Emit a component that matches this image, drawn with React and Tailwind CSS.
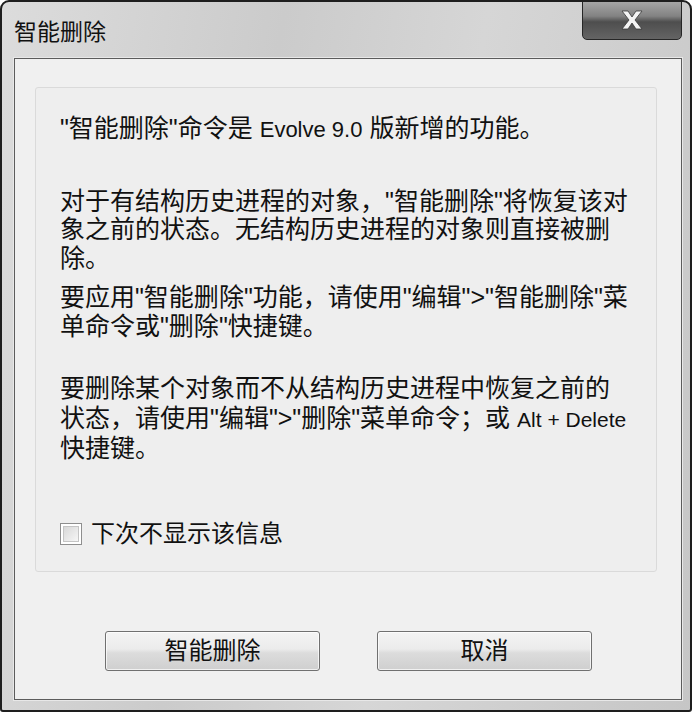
import React from 'react';

const FONT = { fontFamily: '"Liberation Sans", "Noto Sans CJK SC", sans-serif' };

function CloseButton() {
  return (
    <div className="w-[100px] h-[40px] -mt-[2px] rounded-b-[5px] border border-[#262626] bg-[linear-gradient(to_bottom,#a8a8a8_0%,#828282_40%,#4e4e4e_55%,#646464_100%)] shadow-[inset_0_1px_0_rgba(255,255,255,0.45)] flex items-center justify-center">
      <svg width="26" height="22" viewBox="0 0 26 22">
        <path d="M3 2 L9 2 L13 8 L17 2 L23 2 L16 11 L23 20 L17 20 L13 14 L9 20 L3 20 L10 11 Z" fill="#f4f4f4" stroke="#3a3a3a" strokeWidth="0.8" />
      </svg>
    </div>
  );
}

function Checkbox() {
  return (
    <div className="w-[22px] h-[22px] border border-[#8e8e8e] bg-white p-[2px]">
      <div className="w-full h-full border border-[#c4c4c4] bg-[linear-gradient(135deg,#d8d8d8,#f6f6f6)]" />
    </div>
  );
}

function DialogButton({ children }) {
  return (
    <button className="w-[215px] h-[40px] rounded-[3px] border border-[#707070] bg-[linear-gradient(to_bottom,#f4f4f4_0%,#ebebeb_45%,#dcdcdc_55%,#cfcfcf_100%)] shadow-[inset_0_0_0_1px_rgba(255,255,255,0.7)] text-[24px] text-[#111] leading-none">
      {children}
    </button>
  );
}

export default function App() {
  return (
    <div className="w-[694px] h-[713px] bg-white" style={FONT}>
      <div className="w-[692px] h-[712px] border-2 border-[#1e1e1e] rounded-tl-[9px] rounded-tr-[9px] rounded-b-[3px] bg-[linear-gradient(100deg,#dcdcdc_0%,#cbcbcb_35%,#d6d6d6_60%,#c6c6c6_100%)] flex flex-col overflow-hidden">
        {/* Title bar */}
        <div className="h-[56px] flex items-start justify-between pl-[12px] pr-[8px]">
          <div className="mt-[16px] text-[23px] leading-[28px] text-[#111]">智能删除</div>
          <CloseButton />
        </div>

        {/* Client area */}
        <div className="ml-[12px] mr-[8px] mb-[10px] flex-1 border border-[#5c5c5c] bg-[#f0f0f0] shadow-[0_0_0_1px_#e8e8e8]">
          <div className="ml-[20px] mt-[28px] w-[622px] h-[485px] border border-[#dadada] rounded-[3px] bg-[#eeeeee] pl-[24px] pt-[26px] text-[25px] leading-[28.5px] text-[#111] whitespace-nowrap">
            <div>"智能删除"命令是 <span className="text-[22px]">Evolve 9.0</span> 版新增的功能。</div>
            <div className="mt-[42px]">
              对于有结构历史进程的对象，"智能删除"将恢复该对<br />
              象之前的状态。无结构历史进程的对象则直接被删<br />
              除。
            </div>
            <div className="mt-[11px]">
              要应用"智能删除"功能，请使用"编辑">"智能删除"菜<br />
              单命令或"删除"快捷键。
            </div>
            <div className="mt-[34px] leading-[29.5px]">
              要删除某个对象而不从结构历史进程中恢复之前的<br />
              状态，请使用"编辑">"删除"菜单命令；或 <span className="text-[21px]">Alt + Delete</span><br />
              快捷键。
            </div>
            <div className="mt-[56px] flex items-center gap-[9px]">
              <Checkbox />
              <span className="text-[24px]">下次不显示该信息</span>
            </div>
          </div>

          <div className="mt-[59px] ml-[90px] flex gap-[57px]">
            <DialogButton>智能删除</DialogButton>
            <DialogButton>取消</DialogButton>
          </div>
        </div>
      </div>
    </div>
  );
}
